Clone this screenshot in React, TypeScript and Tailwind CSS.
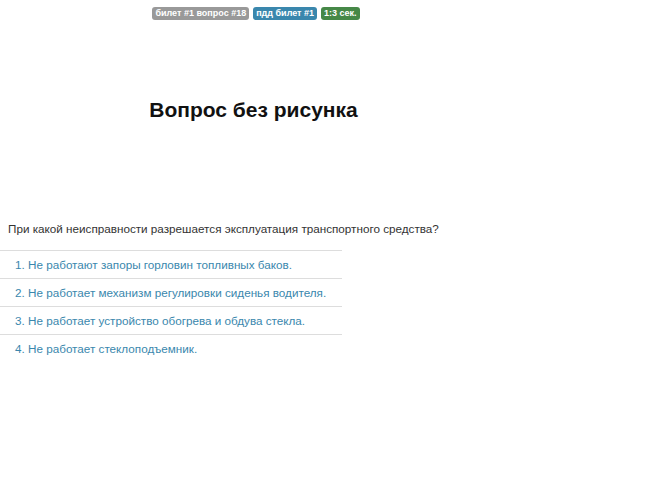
import React from "react";

const answers = [
  "1. Не работают запоры горловин топливных баков.",
  "2. Не работает механизм регулировки сиденья водителя.",
  "3. Не работает устройство обогрева и обдува стекла.",
  "4. Не работает стеклоподъемник.",
];

export default function App() {
  return (
    <div className="min-h-[485px] bg-white text-[#333] font-['Liberation_Sans',Arial,sans-serif]">
      <div className="w-[512px] pt-[7px] flex justify-center gap-[4px]">
        <span className="bg-[#999] text-white text-[9px] font-bold leading-[13px] px-[3px] rounded-[3px]">билет #1 вопрос #18</span>
        <span className="bg-[#3a87ad] text-white text-[9px] font-bold leading-[13px] px-[3px] rounded-[3px]">пдд билет #1</span>
        <span className="bg-[#468847] text-white text-[9px] font-bold leading-[13px] px-[3px] rounded-[3px]">1:3 сек.</span>
      </div>
      <div className="w-[507px] pt-[78px] text-center">
        <h1 className="text-[21px] font-bold leading-[24px] text-[#111]">Вопрос без рисунка</h1>
      </div>
      <p className="pl-[8px] pt-[98px] text-[11.7px] leading-[18px]">При какой неисправности разрешается эксплуатация транспортного средства?</p>
      <ul className="mt-[12px] w-[342px]">
        {answers.map((a, i) => (
          <li key={i} className="border-t border-[#ddd] first:border-t h-[28px] flex items-center pl-[15px] text-[11.7px] text-[#3a87ad]">{a}</li>
        ))}
      </ul>
    </div>
  );
}
